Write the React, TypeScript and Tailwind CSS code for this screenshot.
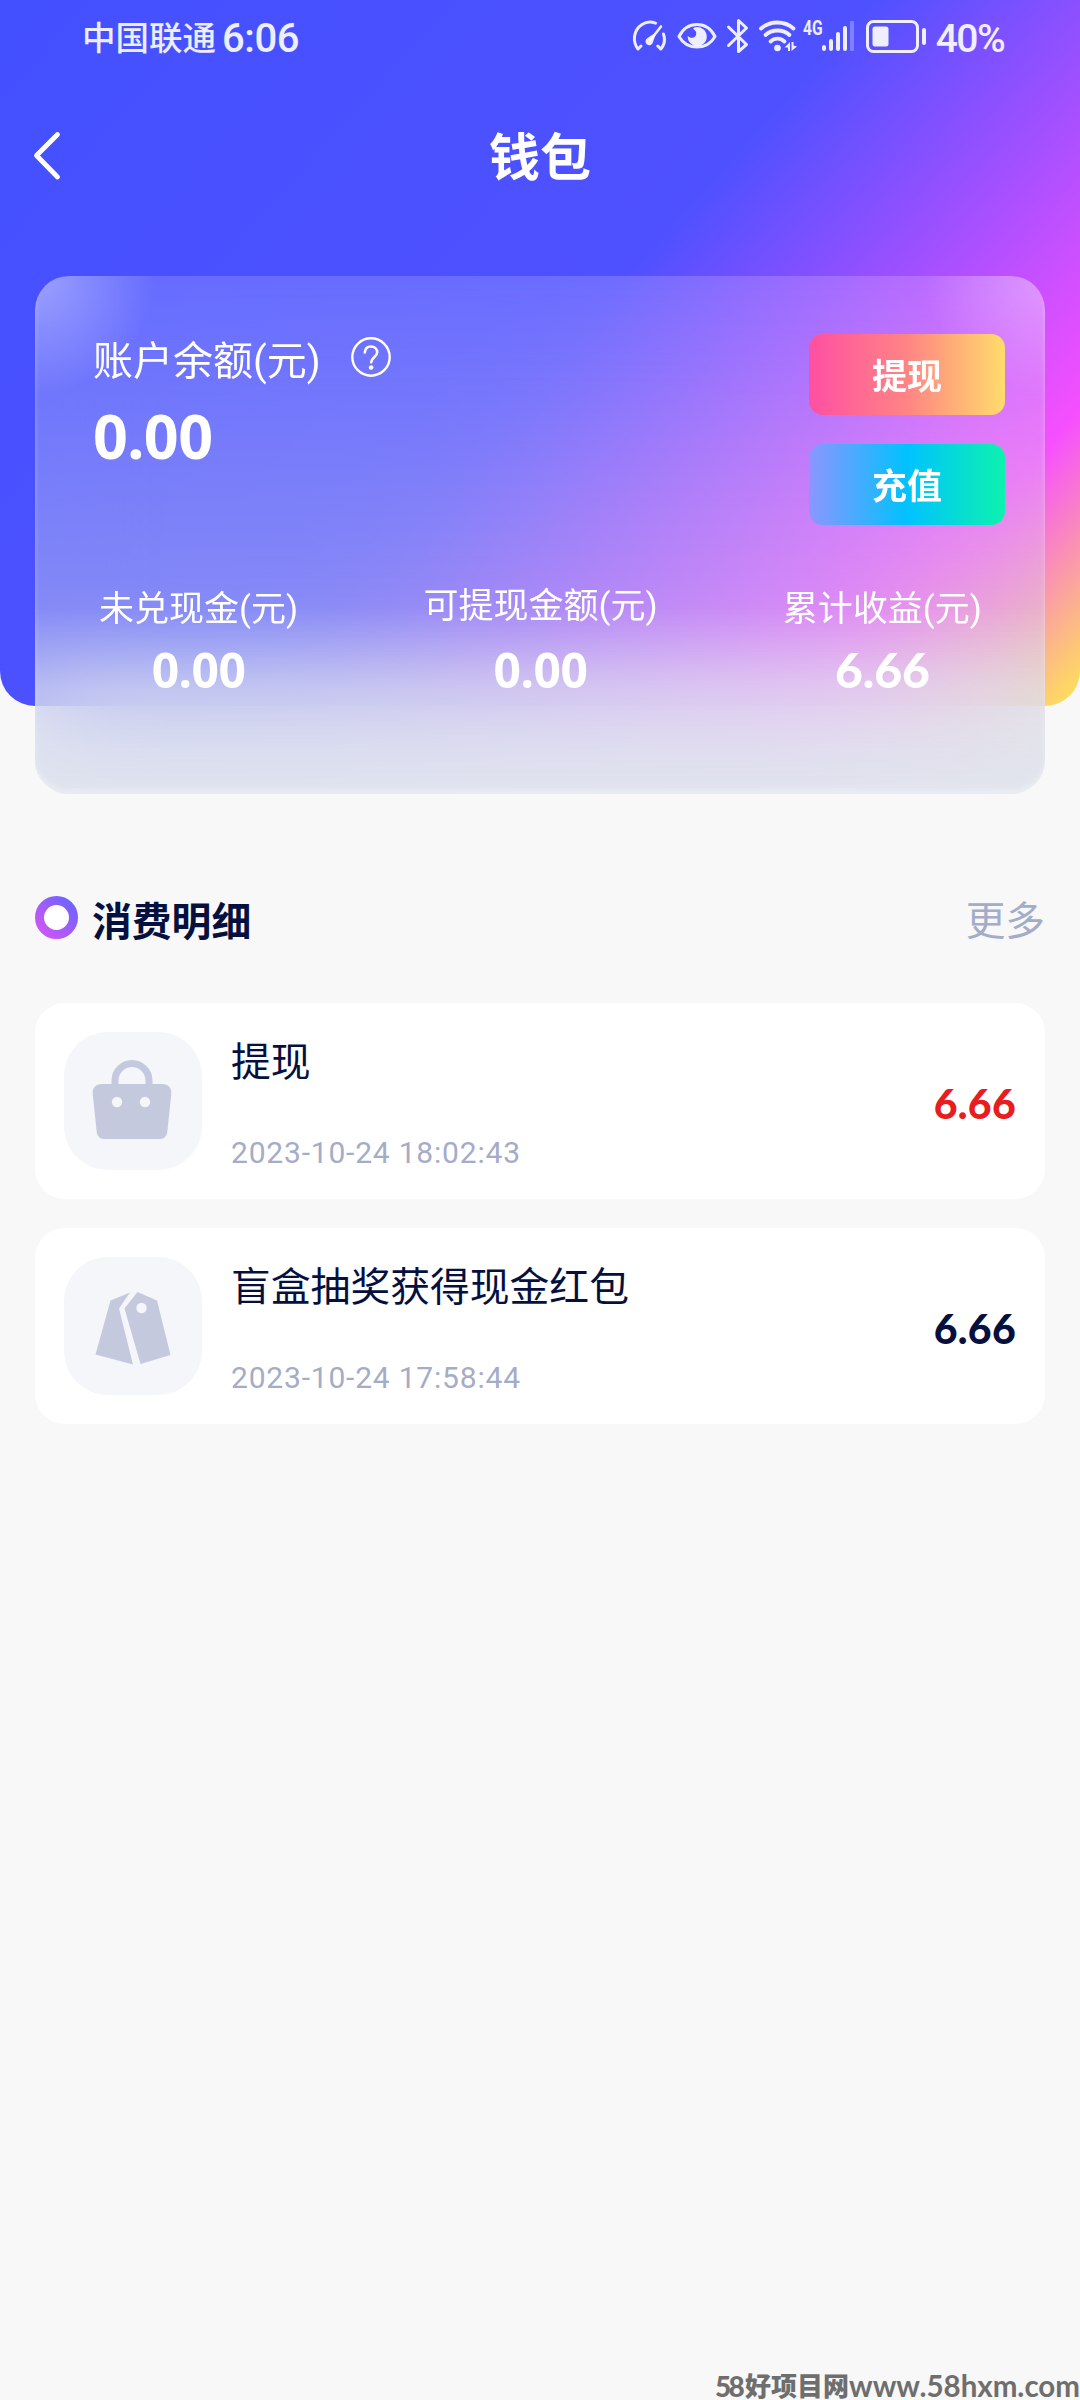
import type { ReactNode } from "react";

interface Stat {
	label: string;
	value: string;
	labelClass?: string;
	valueClass: string;
}

interface RecordItem {
	id: number;
	title: string;
	time: string;
	amount: string;
	amountColor: string;
	icon: ReactNode;
}

const stats: Stat[] = [
	{
		label: "未兑现金(元)",
		value: "0.00",
		valueClass: "font-['Noto_Sans',sans-serif] text-[48px]/[60px] font-bold tracking-[-0.5px]",
	},
	{
		label: "可提现金额(元)",
		value: "0.00",
		labelClass: "-mt-[3px] mb-[3px]",
		valueClass: "font-['Noto_Sans',sans-serif] text-[48px]/[60px] font-bold tracking-[-0.5px]",
	},
	{
		label: "累计收益(元)",
		value: "6.66",
		valueClass: "font-['Lato',sans-serif] text-[48px]/[60px] font-black",
	},
];

const BagIcon = () => (
	<svg className="-mt-[2px] -ml-[3px]" width="80" height="80" viewBox="0 0 80 80" fill="none">
		<path
			d="M23 26V20.500a17 17 0 0 1 34 0V26"
			stroke="#c5c9dd"
			strokeWidth="7"
		/>
		<path
			d="M10 24H70C76 24 80 28 79.300 34L75.300 72C74.700 76.500 72 79 67.500 79H12.500C8 79 5.300 76.500 4.700 72L.7 34C0 28 4 24 10 24Z"
			fill="#c5c9dd"
		/>
		<circle cx="25" cy="42" r="5.200" fill="#f4f6fa" />
		<circle cx="53" cy="42" r="5.200" fill="#f4f6fa" />
	</svg>
);

const TagIcon = () => (
	<svg className="-mt-[2px] -ml-[2px]" width="80" height="80" viewBox="0 0 80 80" fill="#c5c9dd">
		<path d="M38 7.500 18.500 15.500 3.500 69.500 41 79.500 27 23.500Z" />
		<path d="M45.500 7 65 15.500 78.500 70 48.500 79 32.500 23.500Z" />
		<circle cx="49.500" cy="23" r="5.200" fill="#f4f6fa" />
	</svg>
);

const records: RecordItem[] = [
	{
		id: 1,
		title: "提现",
		time: "2023-10-24 18:02:43",
		amount: "6.66",
		amountColor: "text-[#e71d1f]",
		icon: <BagIcon />,
	},
	{
		id: 2,
		title: "盲盒抽奖获得现金红包",
		time: "2023-10-24 17:58:44",
		amount: "6.66",
		amountColor: "text-[#05103f]",
		icon: <TagIcon />,
	},
];

const StatusIcons = () => (
	<div className="flex h-10 items-start text-white/90">
		{/* speed */}
		<svg width="36" height="40" viewBox="0 0 36 40" fill="none" stroke="currentColor">
			<path
				d="M23.500 6.200C14 2.500 4 9 2.500 19.500c-.5 4.500.8 9 3.500 12.500l3-3"
				strokeWidth="3"
				strokeLinecap="round"
				strokeLinejoin="round"
			/>
			<path
				d="M31.500 17c1.800 5.500.8 11-2.700 15l-3-3"
				strokeWidth="3"
				strokeLinecap="round"
				strokeLinejoin="round"
			/>
			<path d="M29 9.500 18.500 23" strokeWidth="2.600" strokeLinecap="round" />
			<path d="M24.500 15 15.500 21a3.800 3.800 0 1 0 5.500 4Z" fill="currentColor" stroke="none" />
		</svg>
		{/* eye comfort */}
		<svg className="ml-[9px]" width="40" height="40" viewBox="0 0 40 40">
			<path
				d="M2 19.500C10 3.500 30 3.500 38 19.500 30 33.500 10 33.500 2 19.500Z"
				fill="none"
				stroke="currentColor"
				strokeWidth="3"
				strokeLinejoin="round"
			/>
			<path
				d="M18.500 10.300a9.500 9.500 0 1 1-7.700 8.400c1.500 2.500 6 3 7.700.3 1.700-2.800.5-5.300-2-6.700-.8-.8.500-1.700 2-2Z"
				fill="currentColor"
			/>
		</svg>
		{/* bluetooth */}
		<svg
			className="ml-[9px]"
			width="24"
			height="40"
			viewBox="0 0 24 40"
			fill="none"
			stroke="currentColor"
			strokeWidth="3"
			strokeLinecap="round"
			strokeLinejoin="round"
		>
			<path d="M2.500 10 20.500 27.500 12.500 34.500V3.500L20.500 11 2.500 28.500" />
		</svg>
		{/* wifi */}
		<svg className="ml-[8px]" width="40" height="40" viewBox="0 0 40 40">
			<g fill="none" stroke="currentColor" strokeWidth="3.800" strokeLinecap="round">
				<path d="M3 11.500c9-8 23.500-8 32.500 0" />
				<path d="M7.500 18c6.500-6 17.500-6 24 0" />
				<path d="M12.500 24.500c4-3.800 10-3.800 14 0" />
			</g>
			<circle cx="19.500" cy="31" r="3.300" fill="currentColor" />
			<path d="M32 25v9h-2v-3.500h-3.500Z" fill="currentColor" />
			<path d="M33.500 34V25h2v3.500l3.500 1Z" fill="currentColor" />
		</svg>
		<span className="ml-[5px] mt-[1px] w-[19px] origin-left scale-x-[.78] text-[20px]/[20px] font-bold">
			4G
		</span>
		{/* signal */}
		<svg width="33" height="40" viewBox="0 0 33 40" fill="currentColor">
			<rect x="0" y="28" width="4" height="6" rx="2" />
			<rect x="7" y="22" width="4" height="12" rx="2" />
			<rect x="14" y="15" width="4" height="19" rx="2" />
			<rect x="21" y="9" width="4" height="25" rx="2" />
			<rect x="28" y="4" width="4" height="30" rx="1" opacity=".3" />
		</svg>
		{/* battery */}
		<svg className="ml-[11px]" width="61" height="40" viewBox="0 0 61 40">
			<rect
				x="1.500"
				y="4.500"
				width="50"
				height="30"
				rx="6"
				fill="none"
				stroke="currentColor"
				strokeWidth="3"
			/>
			<rect x="6.500" y="9.500" width="16" height="20" rx="2.500" fill="currentColor" />
			<rect x="56" y="11" width="4" height="17" rx="2" fill="currentColor" />
		</svg>
		<span className="ml-[9px] mt-[2px] text-[39px]/[40px] font-medium tracking-[-1.6px]">
			40%
		</span>
	</div>
);

const App = () => {
	return (
		<div className="flex h-[2400px] w-[1080px] flex-col overflow-hidden bg-[#f8f8f8] font-['Roboto','Noto_Sans_CJK_SC',sans-serif]">
			<header className="h-[706px] shrink-0 rounded-b-[35px] bg-[linear-gradient(132deg,#4350ff_0%,#4f51ff_51%,#f64fff_84.500%,#ffe257_99.500%)] px-[35px] text-white">
				<div className="flex h-[76px] items-start pt-[17px]">
					<div className="ml-[47px] flex h-10 flex-1 items-center text-white/90">
						<span className="mt-[3px] text-[33.500px]/[40px] font-medium">中国联通</span>
						<span className="ml-[6px] mt-[4px] text-[40px]/[40px] font-medium tracking-[-0.4px]">
							6:06
						</span>
					</div>
					<div className="mr-[41px]">
						<StatusIcons />
					</div>
				</div>

				<nav className="flex h-[160px] items-center justify-between">
					<svg className="-ml-[5px] w-[52px]" height="52" viewBox="0 0 52 52" fill="none">
						<path
							d="M27.500 4.500 6.500 25.500 27.500 47"
							stroke="#fff"
							strokeWidth="4.800"
							strokeLinecap="round"
							strokeLinejoin="round"
						/>
					</svg>
					<h1 className="pt-[7px] text-[51px] font-bold">钱包</h1>
					<div className="w-[47px]" />
				</nav>

				<section className="mt-[40px] flex h-[518px] flex-col justify-between rounded-[34px] bg-[radial-gradient(120px_120px_at_0_0,rgba(255,255,255,.36),rgba(255,255,255,0)),radial-gradient(120px_120px_at_100%_0,rgba(255,255,255,.3),rgba(255,255,255,0)),linear-gradient(180deg,rgba(224,228,238,0)_64%,rgba(224,228,238,.42)_80%,rgba(224,228,238,.5)_100%),linear-gradient(180deg,rgba(255,255,255,.16),rgba(206,213,230,.55))] pb-[94px] shadow-[inset_0_-5px_5px_rgba(248,248,248,.35)] backdrop-blur-[54px]">
					<div className="flex justify-between pl-[58px] pr-[40px]">
						<div className="pt-[55px]">
							<div className="flex items-center">
								<span className="pt-[5px] text-[40px]/[51px]">账户余额(元)</span>
								<svg className="-mt-[4px] ml-[30px]" width="40" height="40" viewBox="0 0 40 40" fill="none">
									<circle cx="20" cy="20" r="18.700" stroke="#fff" strokeWidth="2.400" />
									<path
										d="M13.800 15.500c.3-4 3-6 6.200-6 3.500 0 6.200 2.300 6.200 5.800 0 5-6 5-6 10"
										stroke="#fff"
										strokeWidth="2.600"
										strokeLinecap="round"
									/>
									<circle cx="20.100" cy="30.500" r="2.300" fill="#fff" />
								</svg>
							</div>
							<p className="mt-[9px] font-['Noto_Sans',sans-serif] text-[61px]/[80px] font-bold tracking-[-0.6px]">
								0.00
							</p>
						</div>
						<div className="flex flex-col gap-[29px] pt-[58px] text-[35px] font-bold">
							<button className="h-[81px] w-[196px] rounded-[14px] bg-[linear-gradient(90deg,#ff4fa3,#ff8484_50%,#ffdc6b)] pt-[8px]">
								提现
							</button>
							<button className="h-[81px] w-[196px] rounded-[14px] bg-[linear-gradient(90deg,#8b96ff,#00c2ff_50%,#0df2ae)] pt-[8px]">
								充值
							</button>
						</div>
					</div>

					<div className="flex justify-between pl-[64px] pr-[63px]">
						{stats.map((item) => (
							<div key={item.label} className="flex flex-col items-center">
								<span className={`text-[35px]/[44px] ${item.labelClass ?? ""}`}>
									{item.label}
								</span>
								<span className={`mt-[8px] ${item.valueClass}`}>{item.value}</span>
							</div>
						))}
					</div>
				</section>
			</header>

			<main className="mt-[177px] flex flex-1 flex-col px-[35px]">
				<div className="flex h-[74px] items-center justify-between">
					<div className="flex items-center">
						<svg className="-mt-[5px]" width="43" height="43" viewBox="0 0 43 43">
							<defs>
								<linearGradient id="ring" x1="0" y1="1" x2="1" y2="0">
									<stop offset=".1" stopColor="#c857f5" />
									<stop offset=".9" stopColor="#7562ff" />
								</linearGradient>
							</defs>
							<circle cx="21.500" cy="21.500" r="17" fill="#fff" stroke="url(#ring)" strokeWidth="9" />
						</svg>
						<h2 className="ml-[14px] pt-[5px] text-[39.800px] font-bold text-[#05103f]">
							消费明细
						</h2>
					</div>
					<span className="pt-[3px] text-[39.700px] text-[#a4acc8]">更多</span>
				</div>

				<ul className="mt-[46px] flex flex-col gap-[29px]">
					{records.map((item) => (
						<li key={item.id} className="flex h-[196px] items-center rounded-[30px] bg-white px-[29px]">
							<div className="flex size-[138px] items-center justify-center rounded-[44px] bg-[#f4f6fa]">
								{item.icon}
							</div>
							<div className="ml-[29px] flex h-[138px] flex-1 flex-col justify-between pt-[3px]">
								<p className="text-[39.800px]/[56px] text-[#05103f]">{item.title}</p>
								<p className="-mb-[1px] text-[30px]/[36px] tracking-[0.8px] text-[#a4acc8]">
									{item.time}
								</p>
							</div>
							<span
								className={`pt-[5px] font-['Lato',sans-serif] text-[41px] font-black tracking-[0.3px] ${item.amountColor}`}
							>
								{item.amount}
							</span>
						</li>
					))}
				</ul>
			</main>

			<footer className="flex h-[28px] items-center justify-end whitespace-nowrap font-['Lato','Noto_Sans_CJK_SC',sans-serif] text-[#6e6e6e]">
				<span className="text-[28px]/[26px] font-black tracking-[-2.8px]">58</span>
				<span className="ml-[3px] text-[26px]/[26px] font-black">好项目网</span>
				<span className="text-[29.500px]/[26px] font-bold">www.58hxm.com</span>
			</footer>
		</div>
	);
};

export default App;
